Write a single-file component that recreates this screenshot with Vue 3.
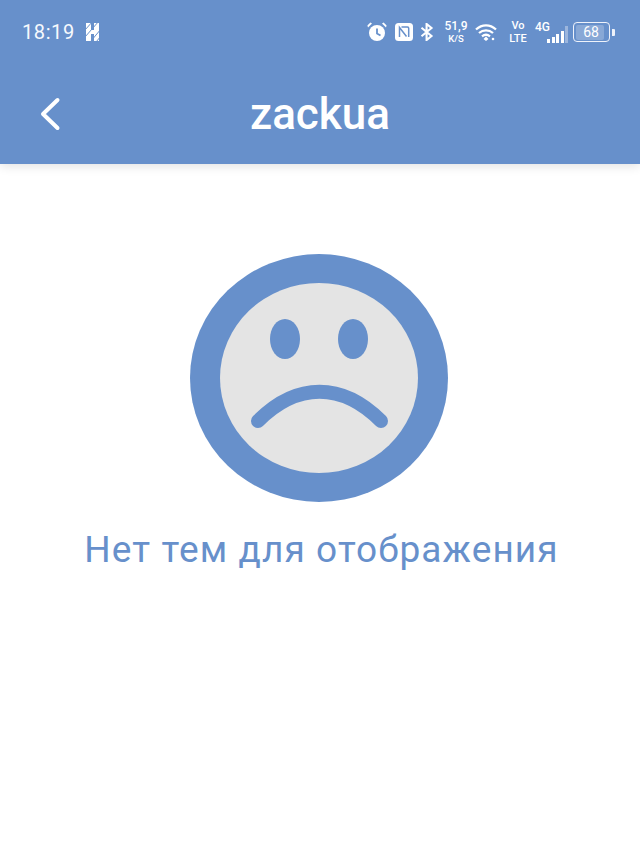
<template>
  <div class="page">
    <header class="app-header">
      <div class="status-bar">
        <div class="status-left">
          <span class="time">18:19</span>
          <svg class="hd" width="15" height="18" viewBox="0 0 15 18">
            <path d="M1 0h5v7h3V0h5v18H9v-7H6v7H1z" fill="#fff" />
            <path d="M0 7 8-2M0 14 14-2M6 18 16 6M11 19 16 13" stroke="#6790cb" stroke-width="1" />
          </svg>
        </div>
        <div class="status-right">
          <svg class="alarm" width="20" height="20" viewBox="0 0 20 20">
            <circle cx="10" cy="11" r="8" fill="#fff" />
            <path d="M10 6.5V11.5L13.5 13.5" fill="none" stroke="#6790cb" stroke-width="1.8" />
            <path d="M1 5.5 5 1.6 3.4.6.4 3.4zM19 5.5 15 1.6 16.6.6 19.6 3.4z" fill="#fff" />
          </svg>
          <svg class="nfc" width="18" height="18" viewBox="0 0 18 18">
            <rect width="18" height="18" rx="3.5" fill="#fff" />
            <path d="M4.5 14V4.5L11.5 13.5M6.5 4H12.5C13.3 4 13.7 4.4 13.7 5.2V14" fill="none" stroke="#6790cb" stroke-width="1.5" />
          </svg>
          <svg class="bt" width="14" height="18" viewBox="0 0 14 18">
            <path d="M1.5 4.8 11.5 13 6.6 17V1L11.5 5 1.5 13.2" fill="none" stroke="#fff" stroke-width="2.1" />
          </svg>
          <div class="speed"><span class="speed-num">51,9</span><span class="speed-unit">K/S</span></div>
          <svg class="wifi" width="22" height="18" viewBox="0 0 22 18">
            <path d="M1 6.5C7 1 15 1 21 6.5M4 10C8 6.5 14 6.5 18 10M7 13.3C9.5 11.3 12.5 11.3 15 13.3" fill="none" stroke="#fff" stroke-width="2.3" />
            <path d="M11 13.5 13.5 16 11 18 8.5 16z" fill="#fff" />
            <circle cx="18" cy="16" r="1.3" fill="#fff" />
          </svg>
          <div class="volte"><span>Vo</span><span>LTE</span></div>
          <div class="network">
            <span class="four-g">4G</span>
            <div class="signal">
              <i v-for="bar in signalBars" :key="bar.h" :class="{ off: bar.off }" :style="{ height: bar.h + 'px' }"></i>
            </div>
          </div>
          <div class="battery">
            <div class="battery-body"><div class="battery-fill">68</div></div>
            <div class="battery-nub"></div>
          </div>
        </div>
      </div>
      <div class="toolbar">
        <svg class="back" width="22" height="34" viewBox="0 0 22 34">
          <path d="M18.5 3 4 17 18.5 31" fill="none" stroke="#fff" stroke-width="4" stroke-linecap="round" stroke-linejoin="round" />
        </svg>
        <h1 class="title">zackua</h1>
      </div>
    </header>

    <main class="empty">
      <svg class="face" width="258" height="248" viewBox="0 0 258 248">
        <ellipse cx="129" cy="124" rx="129" ry="124" fill="#6790cb" />
        <ellipse cx="129" cy="124" rx="99" ry="95" fill="#e4e4e4" />
        <ellipse cx="95" cy="85" rx="15" ry="20" fill="#6790cb" />
        <ellipse cx="163" cy="85" rx="15" ry="20" fill="#6790cb" />
        <path d="M68 167C107 128 152 128 191 167" fill="none" stroke="#6790cb" stroke-width="14" stroke-linecap="round" />
      </svg>
      <p class="empty-text">{{ message }}</p>
    </main>
  </div>
</template>

<script setup>
const message = 'Нет тем для отображения'

const signalBars = [
  { h: 4 },
  { h: 6 },
  { h: 9 },
  { h: 12 },
  { h: 17, off: true },
]
</script>

<style>
html, body {
  background: #fff;
}
</style>

<style scoped>
.page {
  height: 847px;
  overflow: hidden;
  background: #fff;
  font-family: Roboto, "Liberation Sans", sans-serif;
}

.app-header {
  height: 164px;
  background: #6790cb;
  box-shadow: 0 2px 10px rgba(0, 0, 0, 0.12);
  color: #fff;
}

.status-bar {
  height: 64px;
  display: flex;
  justify-content: space-between;
  align-items: center;
  padding: 0 25px 0 22px;
}

.status-left {
  display: flex;
  align-items: center;
  gap: 10px;
}

.time {
  font-size: 20px;
  letter-spacing: 0.6px;
  color: #f6f9fd;
}

.status-right {
  display: flex;
  align-items: center;
  color: #fff;
}

.nfc { margin-left: 8px; }
.bt { margin-left: 7px; }
.speed { margin-left: 10px; width: 24px; }
.wifi { margin-left: 7px; }
.volte { margin-left: 12px; width: 18px; }
.network { margin-left: 8px; }
.battery { margin-left: 5px; }

.speed, .volte {
  display: flex;
  flex-direction: column;
  align-items: center;
  font-weight: 500;
}

.speed-num {
  font-size: 12px;
  line-height: 13px;
}

.speed-unit {
  font-size: 9.5px;
  line-height: 11px;
}

.volte {
  font-size: 11px;
  line-height: 13px;
}

.network {
  position: relative;
  width: 33px;
  height: 22px;
}

.four-g {
  position: absolute;
  left: 0;
  top: 0;
  font-size: 12px;
  line-height: 12px;
  font-weight: 500;
}

.signal {
  position: absolute;
  right: 0;
  bottom: 0;
  display: flex;
  align-items: flex-end;
  gap: 1.5px;
}

.signal i {
  display: block;
  width: 3px;
  background: #fff;
}

.signal i.off {
  background: rgba(255, 255, 255, 0.35);
}

.battery {
  display: flex;
  align-items: center;
  gap: 2px;
}

.battery-body {
  width: 37px;
  height: 20px;
  box-sizing: border-box;
  border: 1.5px solid #eef2fa;
  border-radius: 4px;
  padding: 1.5px;
}

.battery-fill {
  box-sizing: border-box;
  width: 28px;
  height: 100%;
  background: rgba(255, 255, 255, 0.22);
  border-radius: 2px;
  font-size: 14px;
  line-height: 14px;
  text-align: center;
  padding-left: 3px;
  color: #fff;
}

.battery-nub {
  width: 3px;
  height: 7px;
  background: #eef2fa;
  border-radius: 0 1px 1px 0;
}

.toolbar {
  position: relative;
  height: 100px;
  display: flex;
  align-items: center;
  justify-content: center;
}

.back {
  position: absolute;
  left: 39px;
  top: 33px;
}

.title {
  margin: 0;
  font-size: 44px;
  font-weight: 500;
  line-height: 108px;
  height: 108px;
}

.empty {
  display: flex;
  flex-direction: column;
  align-items: center;
  padding-top: 90px;
}

.face {
  margin-left: -2px;
}

.empty-text {
  margin: 21px 0 0 3px;
  font-size: 37px;
  line-height: 54px;
  letter-spacing: 1.1px;
  color: #6790cb;
}
</style>
